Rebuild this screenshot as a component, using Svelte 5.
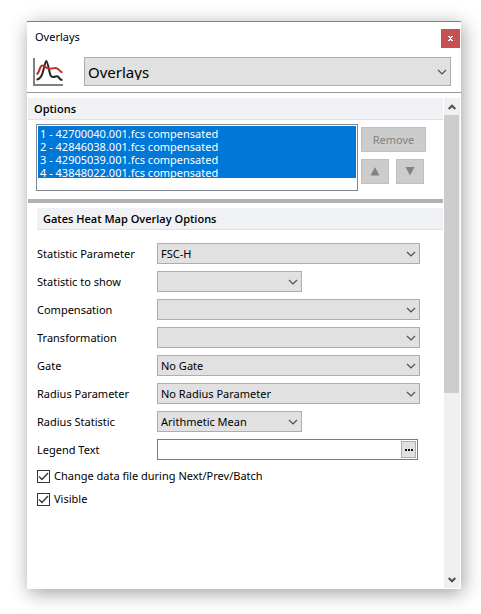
<script>
  let files = $state([
    '1 - 42700040.001.fcs compensated',
    '2 - 42846038.001.fcs compensated',
    '3 - 42905039.001.fcs compensated',
    '4 - 43848022.001.fcs compensated'
  ]);
  let selected = $state([0, 1, 2, 3]);

  let fields = $state([
    { id: 'stat-param', label: 'Statistic Parameter', value: 'FSC-H' },
    { id: 'stat-show', label: 'Statistic to show', value: '', short: true },
    { id: 'compensation', label: 'Compensation', value: '' },
    { id: 'transformation', label: 'Transformation', value: '' },
    { id: 'gate', label: 'Gate', value: 'No Gate' },
    { id: 'radius-param', label: 'Radius Parameter', value: 'No Radius Parameter' },
    { id: 'radius-stat', label: 'Radius Statistic', value: 'Arithmetic Mean', short: true }
  ]);

  let legend = $state('');
  let changeFile = $state(true);
  let visible = $state(true);
</script>

{#snippet chevron()}
  <svg class="chevron" width="10" height="6" viewBox="0 0 10 6" aria-hidden="true">
    <path d="M1 1l4 4 4-4" fill="none" stroke="#505050" stroke-width="1.2" />
  </svg>
{/snippet}

<main class="desktop">
  <section class="window">
    <header class="titlebar">
      <span>Overlays</span>
      <button class="close" aria-label="Close">
        <svg width="5" height="5" viewBox="0 0 5 5">
          <path d="M0 0h2v1h1V0h2v1H4v1H3v1h1v1h1v1H3V4H2v1H0V4h1V3h1V2H1V1H0z" fill="#fff" />
        </svg>
      </button>
    </header>

    <div class="picker">
      <svg width="30" height="28" viewBox="0 0 30 28" aria-hidden="true">
        <path d="M1 0v27h29" fill="none" stroke="#808080" stroke-width="2" />
        <path d="M3.500 21.500c4 0 5.500-3.500 6.800-9S12.500 3 13.300 3s1.700 4 2.800 9 1.400 7 4 7 3.200-1.300 4.700-.5 1.500 3.500 4.700 3.500" fill="none" stroke="#262626" stroke-width="2" />
        <path d="M3.500 16C7 15.500 6 7.500 9.500 7.500c2.500 0 3.500 3.300 7 3.300 3 0 3.500-.8 6-.8 4 0 3.500 4 7 4.500" fill="none" stroke="#c1272d" stroke-width="2" />
      </svg>
      <div class="combo large">
        <select aria-label="Object type">
          <option>Overlays</option>
        </select>
        {@render chevron()}
      </div>
    </div>

    <div class="body">
      <div class="content">
        <h2>Options</h2>
        <div class="files">
          <select class="file-list" multiple bind:value={selected} aria-label="Overlay files">
            {#each files as file, i}
              <option value={i}>{file}</option>
            {/each}
          </select>
          <div class="file-actions">
            <button class="remove" disabled>Remove</button>
            <div class="move">
              <button disabled aria-label="Move up">
                <svg width="10" height="9" viewBox="0 0 10 9"><path d="M5 0l4.500 8.500h-9z" fill="#838383" /></svg>
              </button>
              <button disabled aria-label="Move down">
                <svg width="10" height="9" viewBox="0 0 10 9"><path d="M5 8.500L.5 0h9z" fill="#838383" /></svg>
              </button>
            </div>
          </div>
        </div>

        <hr />

        <div class="group">
          <h3>Gates Heat Map Overlay Options</h3>
          <div class="fields">
            {#each fields as field}
              <div class="field">
                <label for={field.id}>{field.label}</label>
                <div class="combo" class:short={field.short}>
                  <select id={field.id} bind:value={field.value}>
                    <option value={field.value}>{field.value}</option>
                  </select>
                  {@render chevron()}
                </div>
              </div>
            {/each}
            <div class="field">
              <label for="legend">Legend Text</label>
              <div class="legend">
                <input id="legend" type="text" bind:value={legend} />
                <button aria-label="Edit legend text">
                  <svg width="8" height="2" viewBox="0 0 8 2"><path d="M0 1h2M3 1h2M6 1h2" stroke="#111" stroke-width="2" /></svg>
                </button>
              </div>
            </div>
          </div>

          <div class="checks">
            <label><input type="checkbox" bind:checked={changeFile} />Change data file during Next/Prev/Batch</label>
            <label><input type="checkbox" bind:checked={visible} />Visible</label>
          </div>
        </div>
      </div>

      <div class="scrollbar">
        <button aria-label="Scroll up">
          <svg width="8" height="6" viewBox="0 0 8 6"><path d="M.7 5L4 1.700 7.300 5" fill="none" stroke="#505050" stroke-width="2" /></svg>
        </button>
        <div class="track"><div class="thumb"></div></div>
        <button aria-label="Scroll down">
          <svg width="8" height="6" viewBox="0 0 8 6"><path d="M.7 1L4 4.300 7.300 1" fill="none" stroke="#505050" stroke-width="2" /></svg>
        </button>
      </div>
    </div>
  </section>
</main>

<style>
  :global(body) {
    background: #fff;
  }

  .desktop {
    display: flex;
    box-sizing: border-box;
    min-height: 100vh;
    padding: 21px 20px 25px 27px;
    font-family: "Noto Sans", "Open Sans", sans-serif;
    font-size: 11px;
    line-height: 16px;
    color: #000;
  }

  button,
  select,
  input {
    box-sizing: border-box;
    margin: 0;
    padding: 0;
    font: inherit;
    color: inherit;
    border-radius: 0;
  }

  button {
    display: flex;
    align-items: center;
    justify-content: center;
  }

  .window {
    flex: 1;
    display: flex;
    flex-direction: column;
    min-width: 0;
    background: #fff;
    border-top: 1px solid #808080;
    box-shadow: 2px 4px 18px rgba(0, 0, 0, 0.38);
  }

  .titlebar {
    display: flex;
    align-items: flex-start;
    justify-content: space-between;
    height: 35px;
    padding: 7px 1px 0 8px;
    box-sizing: border-box;
  }

  .close {
    width: 19px;
    height: 19px;
    border: 0;
    background: #c75050;
  }

  .picker {
    display: flex;
    align-items: center;
    gap: 21px;
    padding: 0 10px 6px 6px;
    border-bottom: 1px solid #999;
  }

  .combo {
    display: grid;
    align-items: center;
    width: 263px;
  }

  .combo.short {
    width: 145px;
  }

  .combo.large {
    flex: 1;
    width: auto;
  }

  .combo > select {
    grid-area: 1 / 1;
    width: 100%;
    height: 21px;
    padding: 0 20px 0 3px;
    appearance: none;
    border: 1px solid #adadad;
    background: #e1e1e1;
  }

  .combo.large > select {
    height: 29px;
    font-size: 15px;
  }

  .chevron {
    grid-area: 1 / 1;
    justify-self: end;
    margin-right: 4px;
    pointer-events: none;
  }

  .body {
    flex: 1;
    display: flex;
    gap: 1px;
    padding: 5px 1px 1px;
  }

  .content {
    flex: 1;
    min-width: 0;
  }

  h2,
  h3 {
    margin: 0;
    padding-left: 6px;
    font-family: "Open Sans", "Noto Sans", sans-serif;
    font-size: 11px;
    font-weight: 600;
    line-height: 21px;
    background: #f0f1f5;
    border-bottom: 1px solid #e0e1e5;
  }

  .files {
    display: flex;
    gap: 3px;
    padding: 4px 17px 8px 8px;
  }

  .file-list {
    flex: 1;
    min-width: 0;
    height: 67px;
    padding: 1px;
    overflow: hidden;
    border: 1px solid #828790;
    background: #fff;
  }

  .file-list option {
    box-sizing: border-box;
    height: 13px;
    min-height: 13px;
    padding: 0 2px;
    line-height: 13px;
  }

  .file-list option:checked {
    background: linear-gradient(#0078d7, #0078d7);
    -webkit-text-fill-color: #fff;
  }

  .file-actions {
    display: flex;
    flex-direction: column;
    gap: 7px;
    padding-top: 3px;
  }

  .file-actions button {
    height: 25px;
    border: 1px solid #bfbfbf;
    background: #ccc;
    color: #838383;
  }

  .file-actions .remove {
    width: 65px;
  }

  .move {
    display: flex;
    gap: 7px;
  }

  .move button {
    width: 28px;
  }

  hr {
    height: 4px;
    margin: 0;
    border: 0;
    background: #b1b1b1;
  }

  .group {
    padding: 5px 0 0 9px;
  }

  .fields {
    display: flex;
    flex-direction: column;
    gap: 7px;
    padding-top: 13px;
  }

  .field {
    display: flex;
    align-items: center;
  }

  .field > label {
    width: 120px;
  }

  .legend {
    display: flex;
    width: 261px;
    height: 21px;
    padding: 1px;
    box-sizing: border-box;
    border: 1px solid #7a7a7a;
  }

  .legend input {
    flex: 1;
    min-width: 0;
    padding: 0 3px;
    border: 0;
    outline: 0;
    background: #fff;
  }

  .legend button {
    width: 15px;
    border: 1px solid #adadad;
    background: #e1e1e1;
  }

  .checks {
    display: flex;
    flex-direction: column;
    align-items: flex-start;
    gap: 7px;
    padding-top: 8px;
  }

  .checks label {
    display: flex;
    align-items: center;
    gap: 4px;
  }

  .checks input {
    width: 13px;
    height: 13px;
    appearance: none;
    border: 1px solid #333;
    background: #fff;
  }

  .checks input:checked {
    background: url("data:image/svg+xml,%3Csvg xmlns='http://www.w3.org/2000/svg' viewBox='0 0 11 11'%3E%3Cpath d='M1 5.500l3 3 6-6.500' fill='none' stroke='%23333' stroke-width='1.300'/%3E%3C/svg%3E") center / 11px 11px no-repeat;
  }

  .scrollbar {
    display: flex;
    flex-direction: column;
    width: 16px;
    background: #f0f0f0;
  }

  .scrollbar button {
    width: 16px;
    height: 17px;
    border: 0;
    background: none;
  }

  .track {
    flex: 1;
  }

  .thumb {
    width: 15px;
    height: 61%;
    background: #cdcdcd;
  }
</style>
